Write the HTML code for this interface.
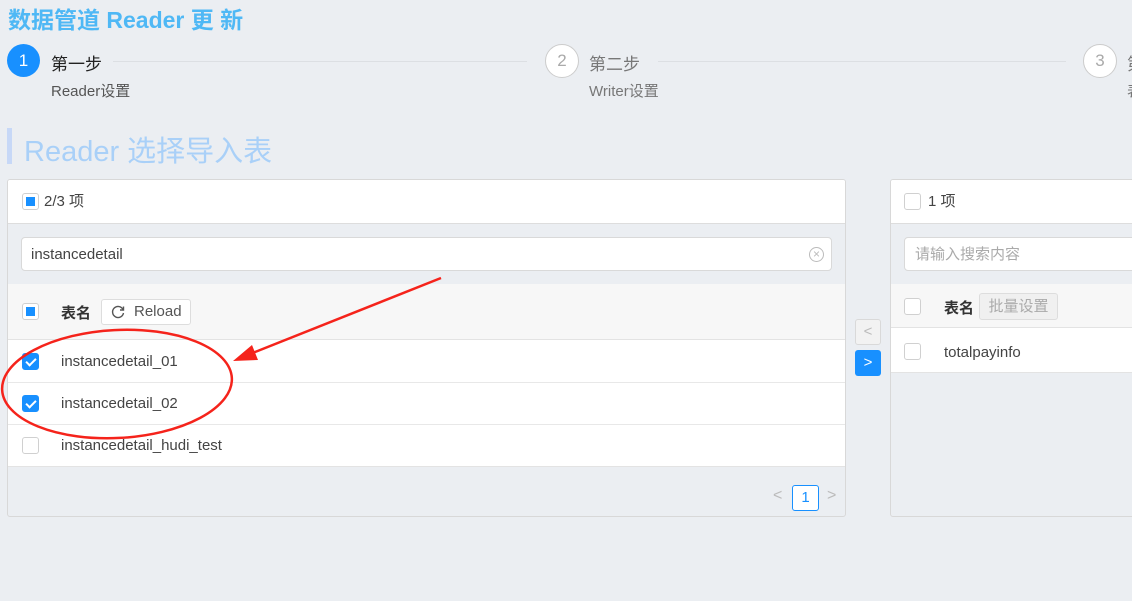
<!DOCTYPE html>
<html><head><meta charset="utf-8"><style>
*{box-sizing:border-box;margin:0;padding:0}
body{width:1132px;height:601px;overflow:hidden;background:#ebeef2;font-family:"Liberation Sans","Noto Sans CJK SC",sans-serif;position:relative;color:#333}
.a{position:absolute}
.cb{position:absolute;width:17px;height:17px;border:1px solid #d0d0d0;border-radius:3px;background:#fff}
.cb.ind::after{content:"";position:absolute;left:3px;top:3px;width:9px;height:9px;background:#1890ff}
.cb.chk{background:#1890ff;border-color:#1890ff}
.cb.chk::after{content:"";position:absolute;left:5px;top:2px;width:4px;height:8px;border:solid #fff;border-width:0 2px 2px 0;transform:rotate(45deg)}
.t{font-size:15px;color:#444;line-height:18px}
</style></head><body>
<div class="a" style="left:8px;top:1px;font-size:23px;font-weight:bold;color:#4fb8f5">数据管道 Reader 更 新</div>
<div class="a" style="left:7px;top:44px;width:33px;height:33px;border-radius:50%;background:#1890ff;color:#fff;font-size:17px;text-align:center;line-height:33px">1</div>
<div class="a" style="left:51px;top:50px;font-size:17px;color:#222">第一步</div>
<div class="a" style="left:51px;top:80px;font-size:15px;color:#555">Reader设置</div>
<div class="a" style="left:113px;top:61px;width:414px;height:1px;background:#dcdfe3"></div>
<div class="a" style="left:545px;top:44px;width:34px;height:34px;border-radius:50%;background:#fff;border:1px solid #ccc;color:#aaa;font-size:17px;text-align:center;line-height:32px">2</div>
<div class="a" style="left:589px;top:50px;font-size:17px;color:#777">第二步</div>
<div class="a" style="left:589px;top:80px;font-size:15px;color:#777">Writer设置</div>
<div class="a" style="left:658px;top:61px;width:408px;height:1px;background:#dcdfe3"></div>
<div class="a" style="left:1083px;top:44px;width:34px;height:34px;border-radius:50%;background:#fff;border:1px solid #ccc;color:#aaa;font-size:17px;text-align:center;line-height:32px">3</div>
<div class="a" style="left:1127px;top:50px;font-size:17px;color:#777">第</div>
<div class="a" style="left:1127px;top:80px;font-size:15px;color:#777">表</div>
<div class="a" style="left:7px;top:128px;width:5px;height:36px;background:#c7d8f7"></div>
<div class="a" style="left:24px;top:128px;font-size:29px;color:#a9d0f8">Reader 选择导入表</div>
<div class="a" style="left:7px;top:179px;width:839px;height:338px;border:1px solid #d8d8d8;border-radius:3px;background:#ebeef2;overflow:hidden">
 <div class="a" style="left:0;top:0;width:100%;height:44px;background:#fff;border-bottom:1px solid #ddd"></div>
 <div class="cb ind" style="left:14px;top:13px"></div>
 <div class="a t" style="left:36px;top:13px">2/3 项</div>
 <div class="a" style="left:13px;top:57px;width:811px;height:34px;background:#fff;border:1px solid #d9d9d9;border-radius:4px"></div>
 <div class="a t" style="left:23px;top:66px;color:#444">instancedetail</div>
 <div class="a" style="left:801px;top:67px;width:15px;height:15px;border:1px solid #bbb;border-radius:50%;color:#bbb;font-size:12px;text-align:center;line-height:12px">×</div>
 <div class="a" style="left:0;top:104px;width:100%;height:56px;background:#f7f7f7;border-bottom:1px solid #e3e3e3"></div>
 <div class="cb ind" style="left:14px;top:123px"></div>
 <div class="a" style="left:53px;top:122px;font-size:15px;font-weight:bold;color:#333">表名</div>
 <div class="a" style="left:93px;top:119px;width:90px;height:26px;border:1px solid #ddd;border-radius:3px;background:#fff;font-size:15px;color:#555;line-height:24px">
  <svg class="a" style="left:9px;top:5px" width="14" height="14" viewBox="0 0 14 14"><path d="M12 4.5A5.5 5.5 0 1 0 12.5 8" fill="none" stroke="#555" stroke-width="1.4"/><path d="M12.5 1.5V5H9" fill="none" stroke="#555" stroke-width="1.4"/></svg>
  <span class="a" style="left:32px;top:0">Reload</span></div>
 <div class="a" style="left:0;top:160px;width:100%;height:126px;background:#fff"></div>
 <div class="a" style="left:0;top:202px;width:100%;height:1px;background:#e8e8e8"></div>
 <div class="a" style="left:0;top:244px;width:100%;height:1px;background:#e8e8e8"></div>
 <div class="a" style="left:0;top:286px;width:100%;height:1px;background:#e3e3e3"></div>
 <div class="cb chk" style="left:14px;top:173px"></div>
 <div class="a t" style="left:53px;top:173px">instancedetail_01</div>
 <div class="cb chk" style="left:14px;top:215px"></div>
 <div class="a t" style="left:53px;top:215px">instancedetail_02</div>
 <div class="cb" style="left:14px;top:257px"></div>
 <div class="a t" style="left:53px;top:257px">instancedetail_hudi_test</div>
 <div class="a" style="left:765px;top:307px;color:#bbb;font-size:16px">&lt;</div>
 <div class="a" style="left:784px;top:305px;width:27px;height:26px;border:1px solid #1890ff;border-radius:3px;background:#fff;color:#1890ff;text-align:center;line-height:24px;font-size:15px">1</div>
 <div class="a" style="left:819px;top:307px;color:#bbb;font-size:16px">&gt;</div>
</div>
<div class="a" style="left:855px;top:319px;width:26px;height:26px;border:1px solid #d9d9d9;border-radius:3px;background:#f2f2f2;color:#bbb;text-align:center;line-height:24px;font-size:15px">&lt;</div>
<div class="a" style="left:855px;top:350px;width:26px;height:26px;border-radius:3px;background:#1890ff;color:#fff;text-align:center;line-height:26px;font-size:15px">&gt;</div>
<div class="a" style="left:890px;top:179px;width:260px;height:338px;border:1px solid #d8d8d8;border-radius:3px;background:#ebeef2;overflow:hidden">
 <div class="a" style="left:0;top:0;width:100%;height:44px;background:#fff;border-bottom:1px solid #ddd"></div>
 <div class="cb" style="left:13px;top:13px"></div>
 <div class="a t" style="left:37px;top:13px">1 项</div>
 <div class="a" style="left:13px;top:57px;width:260px;height:34px;background:#fff;border:1px solid #d9d9d9;border-radius:4px"></div>
 <div class="a t" style="left:24px;top:66px;color:#aaa">请输入搜索内容</div>
 <div class="a" style="left:0;top:104px;width:100%;height:44px;background:#f7f7f7;border-bottom:1px solid #e3e3e3"></div>
 <div class="cb" style="left:13px;top:118px"></div>
 <div class="a" style="left:53px;top:117px;font-size:15px;font-weight:bold;color:#333">表名</div>
 <div class="a" style="left:88px;top:113px;width:79px;height:27px;border:1px solid #ddd;border-radius:3px;background:#f0f0f0;color:#aaa;font-size:15px;text-align:center;line-height:25px">批量设置</div>
 <div class="a" style="left:0;top:148px;width:100%;height:45px;background:#fff;border-bottom:1px solid #e3e3e3"></div>
 <div class="cb" style="left:13px;top:163px"></div>
 <div class="a t" style="left:53px;top:164px">totalpayinfo</div>
</div>
<svg class="a" style="left:0;top:0" width="1132" height="601">
 <ellipse cx="117" cy="384" rx="115" ry="54" fill="none" stroke="#f5231b" stroke-width="2.5" transform="rotate(-3 117 384)"/>
 <line x1="441" y1="278" x2="250" y2="354" stroke="#f5231b" stroke-width="2.5"/>
 <polygon points="233,361 252,345 258,360" fill="#f5231b"/>
</svg>
</body></html>
